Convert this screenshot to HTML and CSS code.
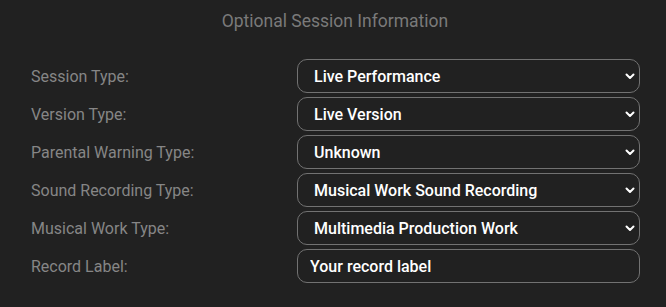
FILE: index.html
```html
<!DOCTYPE html>
<html lang="en">
<head>
    <meta charset="UTF-8">
    <meta name="viewport" content="width=device-width, initial-scale=1.0">
    <title>Optional Session Information</title>
    <link rel="stylesheet" href="styles.css">
</head>
<body>
    <div class="panel">
        <h2 class="title">Optional Session Information</h2>

        <div class="form">
            <label class="label" for="sessionType">Session Type:</label>
            <div class="select-wrap">
                <select id="sessionType" class="field">
                    <option>Live Performance</option>
                </select>
                <svg class="chevron" width="10" height="7" viewBox="0 0 10 7"><path d="M1.5 1.5 L5 5 L8.5 1.5" fill="none" stroke="#fff" stroke-width="2" stroke-linecap="round" stroke-linejoin="round"/></svg>
            </div>

            <label class="label" for="versionType">Version Type:</label>
            <div class="select-wrap">
                <select id="versionType" class="field">
                    <option>Live Version</option>
                </select>
                <svg class="chevron" width="10" height="7" viewBox="0 0 10 7"><path d="M1.5 1.5 L5 5 L8.5 1.5" fill="none" stroke="#fff" stroke-width="2" stroke-linecap="round" stroke-linejoin="round"/></svg>
            </div>

            <label class="label" for="parentalWarning">Parental Warning Type:</label>
            <div class="select-wrap">
                <select id="parentalWarning" class="field">
                    <option>Unknown</option>
                </select>
                <svg class="chevron" width="10" height="7" viewBox="0 0 10 7"><path d="M1.5 1.5 L5 5 L8.5 1.5" fill="none" stroke="#fff" stroke-width="2" stroke-linecap="round" stroke-linejoin="round"/></svg>
            </div>

            <label class="label" for="soundRecording">Sound Recording Type:</label>
            <div class="select-wrap">
                <select id="soundRecording" class="field">
                    <option>Musical Work Sound Recording</option>
                </select>
                <svg class="chevron" width="10" height="7" viewBox="0 0 10 7"><path d="M1.5 1.5 L5 5 L8.5 1.5" fill="none" stroke="#fff" stroke-width="2" stroke-linecap="round" stroke-linejoin="round"/></svg>
            </div>

            <label class="label" for="musicalWork">Musical Work Type:</label>
            <div class="select-wrap">
                <select id="musicalWork" class="field">
                    <option>Multimedia Production Work</option>
                </select>
                <svg class="chevron" width="10" height="7" viewBox="0 0 10 7"><path d="M1.5 1.5 L5 5 L8.5 1.5" fill="none" stroke="#fff" stroke-width="2" stroke-linecap="round" stroke-linejoin="round"/></svg>
            </div>

            <label class="label" for="recordLabel">Record Label:</label>
            <input id="recordLabel" class="field text-field" type="text" value="Your record label">
        </div>
    </div>
</body>
</html>
```

FILE: styles.css
```css
body {
    margin: 0;
    background-color: #212121;
    font-family: Roboto, "Liberation Sans", sans-serif;
}
.panel {
    padding: 11px 0 0 31px;
}
.title {
    margin: 0 0 28px 0;
    padding-right: 27px;
    text-align: center;
    font-size: 17.5px;
    line-height: 20px;
    font-weight: 400;
    color: #7a7a7a;
}
.form {
    display: grid;
    grid-template-columns: 266px 343px;
    grid-auto-rows: 34px;
    row-gap: 4px;
    align-items: center;
}
.label {
    font-size: 16px;
    color: #868686;
}
.select-wrap {
    position: relative;
    height: 34px;
}
.field {
    appearance: none;
    -webkit-appearance: none;
    box-sizing: border-box;
    width: 100%;
    height: 34px;
    margin: 0;
    padding: 0 30px 0 16px;
    background-color: #212121;
    border: 1px solid #727272;
    border-radius: 10px;
    color: #fff;
    font-family: Roboto, "Liberation Sans", sans-serif;
    font-size: 16px;
    font-weight: 500;
    outline: none;
}
.text-field {
    padding-left: 12px;
}
.chevron {
    position: absolute;
    right: 5px;
    top: 14px;
    pointer-events: none;
}
```
